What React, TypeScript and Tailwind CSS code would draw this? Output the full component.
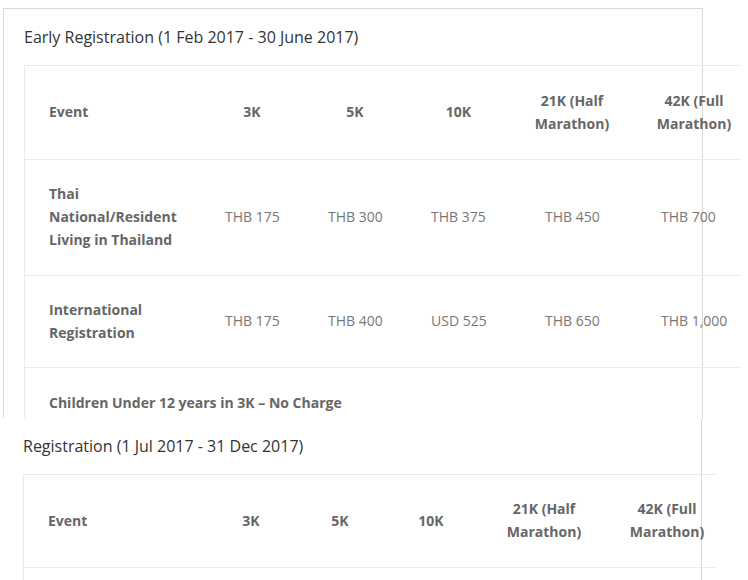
const cols1 = [
  { label: "3K", w: "w-[102px]", pl: "pl-[24px]" },
  { label: "5K", w: "w-[104px]", pl: "pl-[25px]" },
  { label: "10K", w: "w-[103px]", pl: "pl-[24px]" },
  { label: "21K (Half Marathon)", w: "w-[124px]", pl: "pl-[35px]" },
  { label: "42K (Full Marathon)", w: "w-[120px]", pl: "pl-[27px]" },
];

const cols2 = [
  { label: "3K", w: "w-[92px]" },
  { label: "5K", w: "w-[86px]" },
  { label: "10K", w: "w-[96px]" },
  { label: "21K (Half Marathon)", w: "w-[130px]" },
  { label: "42K (Full Marathon)", w: "w-[116px]" },
];

const earlyRows = [
  {
    name: "Thai National/Resident Living in Thailand",
    h: "h-[116px]",
    prices: ["THB 175", "THB 300", "THB 375", "THB 450", "THB 700"],
  },
  {
    name: "International Registration",
    h: "h-[92px]",
    prices: ["THB 175", "THB 400", "USD 525", "THB 650", "THB 1,000"],
  },
];

type Col = { label: string; w: string };

function HeaderRow({ cols, first, h }: { cols: Col[]; first: string; h: string }) {
  return (
    <div className={`flex items-center border-t border-[#ebebeb] pb-[2px] ${h}`}>
      <div className={`${first} shrink-0 px-6 font-bold text-[#666]`}>Event</div>
      {cols.map((c) => (
        <div key={c.label} className={`${c.w} shrink-0 px-4 text-center font-bold text-[#666]`}>
          {c.label}
        </div>
      ))}
    </div>
  );
}

export default function App() {
  return (
    <div
      className="w-[748px] h-[580px] overflow-hidden bg-white text-[14px] leading-[23px]"
      style={{ fontFamily: '"Open Sans", "Liberation Sans", sans-serif' }}
    >
      <div className="pt-[8px]">
        {/* Early registration */}
        <div className="ml-[3px] w-[700px] border-l border-t border-r border-[#d9d9d9] pl-5 pt-4">
          <h2 className="text-[16px] leading-6 text-[#333] mb-4">
            Early Registration (1 Feb 2017 - 30 June 2017)
          </h2>
          <div className="w-[718px] border-l border-[#ebebeb]">
            <HeaderRow cols={cols1} first="w-[176px]" h="h-[94px]" />
            {earlyRows.map((r) => (
              <div key={r.name} className={`flex items-center border-t border-[#ebebeb] pb-[2px] ${r.h}`}>
                <div className="w-[176px] shrink-0 px-6 font-bold text-[#666]">{r.name}</div>
                {r.prices.map((p, i) => (
                  <div key={i} className={`${cols1[i].w} ${cols1[i].pl} shrink-0 text-[#777]`}>
                    {p}
                  </div>
                ))}
              </div>
            ))}
            <div className="h-[51px] border-t border-[#ebebeb] pt-[23px] pl-6 font-bold text-[#666]">
              Children Under 12 years in 3K – No Charge
            </div>
          </div>
        </div>

        {/* Regular registration */}
        <div className="w-[702px] h-[162px] border-r border-[#d9d9d9] pl-[23px] pt-4">
          <h2 className="text-[16px] leading-6 text-[#333] mb-4">
            Registration (1 Jul 2017 - 31 Dec 2017)
          </h2>
          <div className="w-[694px] border-l border-[#ebebeb]">
            <HeaderRow cols={cols2} first="w-[181px]" h="h-[93px]" />
            <div className="h-[40px] border-t border-[#ebebeb]" />
          </div>
        </div>
      </div>
    </div>
  );
}
